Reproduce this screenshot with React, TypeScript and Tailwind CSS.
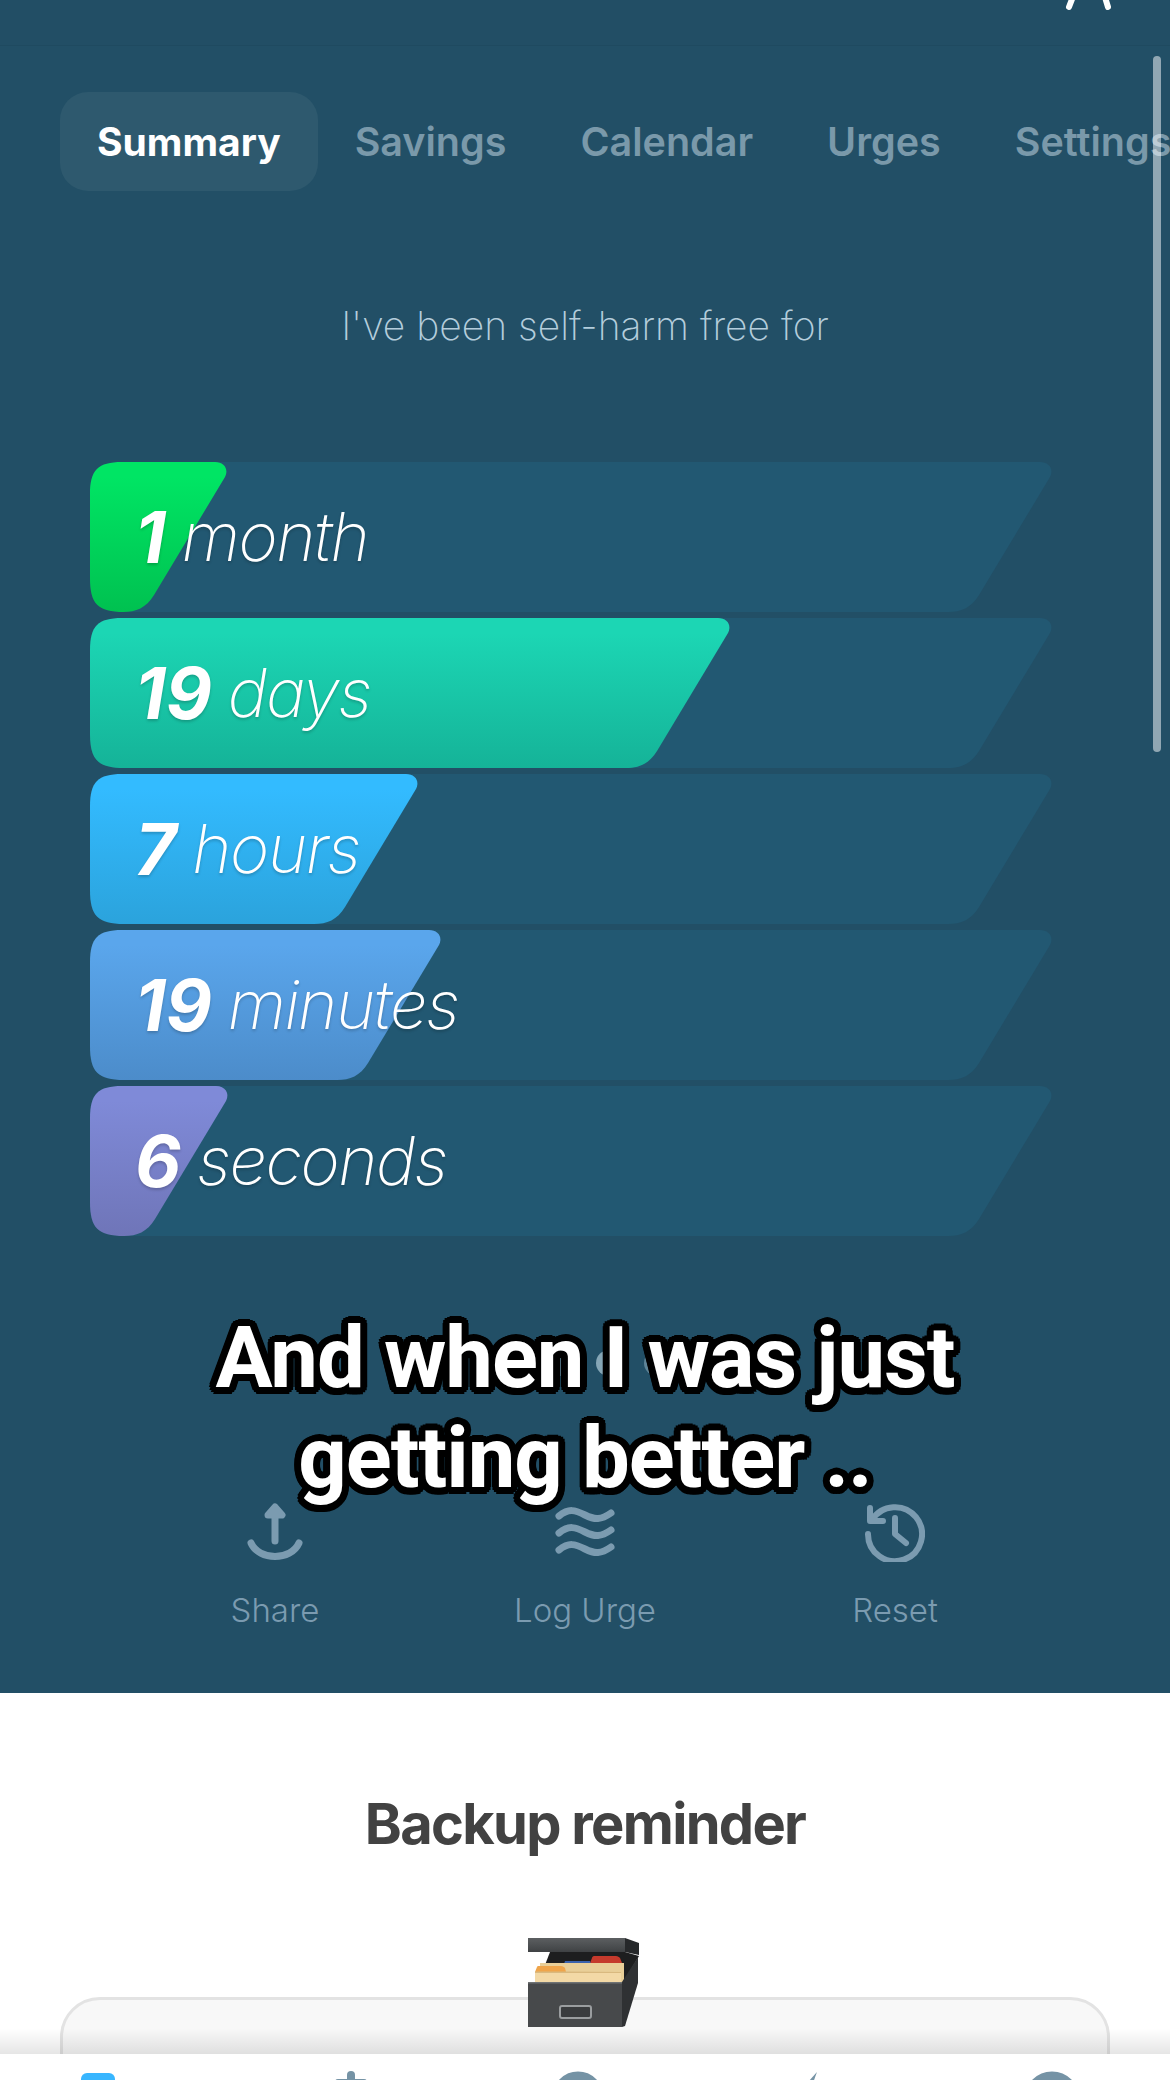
const tabs = ['Summary', 'Savings', 'Calendar', 'Urges', 'Settings']

const bars = [
  { num: '1', unit: 'month', w: 136, from: '#00e564', to: '#00c150', id: 'a' },
  { num: '19', unit: 'days', w: 639, from: '#1cd6b4', to: '#15b398', id: 'b' },
  { num: '7', unit: 'hours', w: 327, from: '#33bbff', to: '#2ba3dc', id: 'c' },
  { num: '19', unit: 'minutes', w: 350, from: '#5aa6ec', to: '#4c8cca', id: 'd' },
  { num: '6', unit: 'seconds', w: 137, from: '#7f8ad8', to: '#6f75b8', id: 'e' },
]

function barPath(w: number) {
  return `M0 32C0 8 8 0 32 0L${w - 11} 0C${w - 2} 0 ${w + 3} 7 ${w - 1} 15L${w - 72} 133C${w - 80} 146 ${w - 90} 150 ${w - 103} 150L34 150C8 150 0 142 0 116Z`
}

function Bar({ num, unit, w, from, to, id }: (typeof bars)[number]) {
  return (
    <div className="relative h-[150px] w-[962px]">
      <svg className="absolute inset-0" width="962" height="150" viewBox="0 0 962 150">
        <defs>
          <linearGradient id={id} x1="0" y1="0" x2="0" y2="1">
            <stop offset="0.1" stopColor={from} />
            <stop offset="1" stopColor={to} />
          </linearGradient>
        </defs>
        <path d={barPath(961)} fill="#225872" />
        <path d={barPath(w)} fill={`url(#${id})`} />
      </svg>
      <div className="relative flex h-full items-center pl-[45px] text-white [text-shadow:0_2px_3px_rgba(0,0,0,0.2)] italic">
        <span className="text-[71px] font-bold">{num}</span>
        <span className="ml-[16px] text-[67px] font-[250] tracking-[-1.5px]">{unit}</span>
      </div>
    </div>
  )
}

function Action({ label, children }: { label: string; children: React.ReactNode }) {
  return (
    <div className="flex w-[310px] flex-col items-center">
      <div className="flex h-[64px] items-center justify-center">{children}</div>
      <span className="mt-[26px] text-[33px] font-light leading-[40px] text-[#7b9bb0]">{label}</span>
    </div>
  )
}

function CardBox() {
  return (
    <svg width="112" height="90" viewBox="0 0 112 90">
      <defs>
        <linearGradient id="lid" x1="0" y1="0" x2="0" y2="1">
          <stop offset="0" stopColor="#5c5f61" />
          <stop offset="1" stopColor="#3f4244" />
        </linearGradient>
      </defs>
      <path d="M22 14L10 45H95L111 18L97 14Z" fill="#1d1e1f" />
      <path d="M0 0H97V14H0Z" fill="url(#lid)" />
      <path d="M97 0L111 5V17L97 14Z" fill="#26282a" />
      <path d="M64 20C64 19 65 18 66 18H88C90 18 91 19 92 20L94 25H62Z" fill="#c53a2c" />
      <path d="M37 23H62L64 29H35Z" fill="#3a62ad" />
      <path d="M12 25H96V45H12Z" fill="#e9cf98" />
      <path d="M9 29C9 28 10 28 11 28H33C35 28 36 29 37 30L38 34H7Z" fill="#efa54b" />
      <path d="M7 34H93V44H7Z" fill="#f3d9a6" />
      <path d="M7 33.5H38L93 34V35H7Z" fill="#d9b97f" />
      <path d="M94 44L110 19V45L97 88L94 89Z" fill="#2f3133" />
      <path d="M0 44H94V89H0Z" fill="#47494b" />
      <path d="M0 44H94V45.5H0Z" fill="#6f7274" />
      <rect x="32" y="68" width="31" height="12" rx="2" fill="#3a3c3e" stroke="#9a9d9f" strokeWidth="2" />
    </svg>
  )
}

export default function App() {
  return (
    <div className="relative h-[2080px] w-[1170px] overflow-hidden bg-white font-['Inter',sans-serif]">
      <div className="relative h-[1693px] bg-[#224f66]">
        <div className="relative h-[46px] border-b border-[#1f4a60] bg-[#224e65]">
          <svg className="absolute left-[1060px] top-0" width="60" height="12" viewBox="0 0 60 12">
            <path d="M14 -6L9 7M44 -6L48 7" fill="none" stroke="#fff" strokeWidth="6" strokeLinecap="round" />
          </svg>
        </div>

        <div className="flex items-center pl-[60px] pt-[46px] whitespace-nowrap">
          {tabs.map((t, i) => (
            <div
              key={t}
              className={
                i === 0
                  ? 'flex h-[99px] shrink-0 items-center rounded-[28px] bg-[#2e596e] px-[37px] pt-[2px] text-[39px] font-bold text-white'
                  : 'flex h-[99px] shrink-0 items-center px-[37px] pt-[2px] text-[39.5px] font-semibold text-[#7a99aa]'
              }
            >
              {t}
            </div>
          ))}
        </div>

        <p className="mt-[112px] text-center text-[39px] leading-[46px] font-extralight text-[#b4cddc]">
          I've been self-harm free for
        </p>

        <div className="mt-[113px] flex flex-col gap-[6px] pl-[90px]">
          {bars.map((b) => (
            <Bar key={b.id} {...b} />
          ))}
        </div>

        <div className="mt-[114px] flex justify-center gap-[22px]">
          <span className="h-[26px] w-[26px] rounded-full bg-[#5f8497]" />
          <span className="h-[26px] w-[26px] rounded-full bg-[#5f8497]" />
          <span className="h-[26px] w-[26px] rounded-full bg-[#85a6b6]" />
          <span className="h-[26px] w-[26px] rounded-full bg-[#5f8497]" />
        </div>

        <div className="mt-[124px] flex px-[120px]">
          <Action label="Share">
            <svg width="56" height="58" viewBox="0 0 56 58" fill="none" stroke="#7b9bb0" strokeWidth="7" strokeLinecap="round" strokeLinejoin="round">
              <path d="M28 38V6" />
              <path d="M21 12L28 4L35 12Z" fill="#7b9bb0" />
              <path d="M4 40C12 58 44 58 52 40" />
            </svg>
          </Action>
          <Action label="Log Urge">
            <svg width="60" height="50" viewBox="0 0 60 50" fill="none" stroke="#7b9bb0" strokeWidth="7" strokeLinecap="round">
              <path d="M4 9C14 1 20 3 30 8S46 13 56 6" />
              <path d="M4 26C14 18 20 20 30 25S46 30 56 23" />
              <path d="M4 43C14 35 20 37 30 42S46 47 56 40" />
            </svg>
          </Action>
          <Action label="Reset">
            <svg width="60" height="60" viewBox="0 0 60 60" fill="none" stroke="#7b9bb0" strokeWidth="6" strokeLinecap="round" strokeLinejoin="round">
              <path d="M7 18A27 27 0 1 1 3 32" />
              <path d="M5 6V19H18" />
              <path d="M30 16V32L41 41" />
            </svg>
          </Action>
        </div>

        <div className="absolute right-[9px] top-[56px] h-[696px] w-[8px] rounded-full bg-white/50" />
      </div>

      <div className="relative bg-white pt-[97px]">
        <h2 className="text-center text-[56px] leading-[68px] font-bold tracking-[-1.7px] text-[#424242]">
          Backup reminder
        </h2>
        <div className="mx-[60px] mt-[139px] h-[200px] rounded-[40px] border-[3px] border-[#e3e3e3] bg-[#f8f8f8]" />
        <div className="absolute left-[528px] top-[245px]">
          <CardBox />
        </div>
      </div>

      {/* barra inferior */}
      <div className="absolute bottom-0 left-0 flex h-[26px] w-full overflow-hidden bg-white pl-[81px] pt-[17px]">
        <div className="mt-[2px] h-[20px] w-[34px] shrink-0 rounded-t-[6px] bg-[#38b6ff]" />
        <svg className="ml-[214px] shrink-0" width="44" height="20" viewBox="0 0 44 20" fill="#7593a5">
          <rect x="18" y="0" width="8" height="20" rx="4" />
          <rect x="6" y="8" width="32" height="6" rx="3" />
        </svg>
        <svg className="ml-[183px] shrink-0" width="44" height="24" viewBox="0 0 44 24" fill="none" stroke="#7593a5" strokeWidth="9">
          <circle cx="22" cy="26" r="21" />
        </svg>
        <svg className="ml-[200px] shrink-0" width="20" height="20" viewBox="0 0 20 20" fill="#7593a5">
          <path d="M17 1L0 20H10Z" />
        </svg>
        <svg className="ml-[207px] shrink-0" width="50" height="24" viewBox="0 0 50 24" fill="none" stroke="#7593a5" strokeWidth="9">
          <circle cx="25" cy="28" r="23" />
        </svg>
      </div>
      <div className="absolute bottom-[26px] left-0 h-[26px] w-full bg-gradient-to-t from-black/10 to-transparent" />

      {/* subtítulo */}
      <div className="pointer-events-none absolute left-0 top-[1308px] w-full text-center font-['Roboto',sans-serif] text-[85px] leading-[100px] font-bold tracking-[-1px] text-white [text-shadow:7px_0_0_#000,6.5px_2.7px_0_#000,5px_5px_0_#000,2.7px_6.5px_0_#000,0_7px_0_#000,-2.7px_6.5px_0_#000,-5px_5px_0_#000,-6.5px_2.7px_0_#000,-7px_0_0_#000,-6.5px_-2.7px_0_#000,-5px_-5px_0_#000,-2.7px_-6.5px_0_#000,0_-7px_0_#000,2.7px_-6.5px_0_#000,5px_-5px_0_#000,6.5px_-2.7px_0_#000]">
        And when I was just
        <br />
        getting better ..
      </div>
    </div>
  )
}
